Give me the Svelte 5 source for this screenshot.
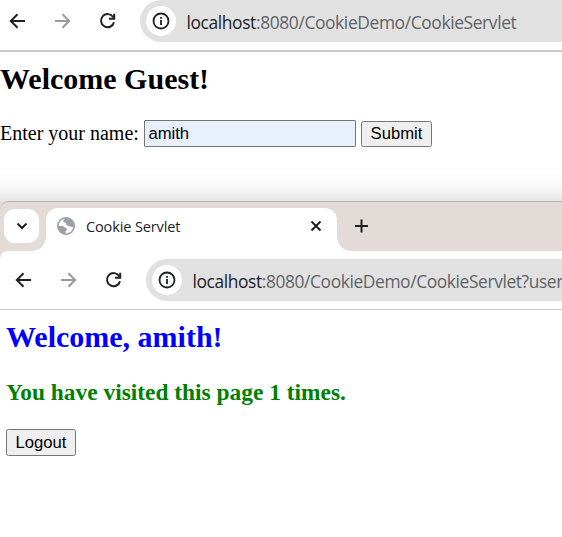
<script>
  const path = '/CookieDemo/CookieServlet';
  let name = $state('amith');
</script>

{#snippet toolbar(query)}
  <div class="toolbar">
    <svg class="nav" width="20" height="20" viewBox="0 0 20 20"><path d="M17 10H3M9.5 3.3L2.8 10L9.5 16.7" /></svg>
    <svg class="nav muted" width="20" height="20" viewBox="0 0 20 20"><path d="M2 10H16M9.5 3.3L16.2 10L9.5 16.7" /></svg>
    <svg class="nav" width="20" height="20" viewBox="0 0 20 20"><path d="M15.2 6.2A6.6 6.6 0 1 0 16 11.3M16.2 2.7V7.8H10.9" /></svg>
    <div class="address">
      <span class="site">
        <svg width="18" height="18" viewBox="0 0 18 18"><circle cx="9" cy="9" r="7.5" /><path d="M9 8V13M9 5V6.7" /></svg>
      </span>
      <span class="url"><b>localhost</b>:8080{path}{query}</span>
    </div>
  </div>
{/snippet}

<main>
  <section class="first">
    {@render toolbar('')}
    <div class="page">
      <h1>Welcome Guest!</h1>
      <form onsubmit={(e) => e.preventDefault()}>
        <label for="name">Enter your name:</label>
        <input id="name" bind:value={name} />
        <button>Submit</button>
      </form>
    </div>
  </section>

  <section class="second">
    <div class="strip">
      <span class="search">
        <svg width="12" height="10" viewBox="0 0 12 10"><path d="M1.5 2.5L6 7L10.5 2.5" /></svg>
      </span>
      <div class="tab">
        <svg class="globe" width="18" height="18" viewBox="0 0 18 18">
          <circle cx="9" cy="9" r="9" />
          <path d="M9.2 1.7C6.5 2 5.6 4 6.9 5.1C8 6 9.3 5.5 9.1 7.1C8.9 8.5 10.7 8.8 12.3 8.9C14.4 9 14 11 16.2 9.7C15.9 13.5 12.7 16.4 8.5 16.2V14.2C10.5 13.8 10.6 11.6 8.9 11.1C7.5 10.7 7.4 9 5.5 9H1.8C1.5 5 4.6 1.7 9.2 1.7Z" />
        </svg>
        <span class="title">Cookie Servlet</span>
        <svg class="close" width="12" height="12" viewBox="0 0 12 12"><path d="M1.5 1.5L10.5 10.5M10.5 1.5L1.5 10.5" /></svg>
      </div>
      <svg class="plus" width="14" height="14" viewBox="0 0 14 14"><path d="M6.5 .5V13.5M0 7H13" /></svg>
    </div>
    {@render toolbar('?user')}
    <div class="page">
      <h1>Welcome, amith!</h1>
      <h2>You have visited this page 1 times.</h2>
      <button>Logout</button>
    </div>
  </section>
</main>

<style>
  main {
    width: 562px;
    height: 537px;
    overflow: hidden;
    background: #fff;
    color: #000;
    font-family: 'Liberation Serif', serif;
  }
  section { overflow: hidden; }
  svg { display: block; flex: none; fill: none; stroke: #202124; stroke-width: 2; }
  .first {
    height: 201px;
    background: linear-gradient(#fff 172px, #f8f8f8 187px, #e6e6e6 201px);
  }
  .toolbar {
    display: flex;
    align-items: center;
    box-sizing: border-box;
    background: #fff;
  }
  .first .toolbar { height: 52px; padding: 0 0 8px 8px; border-bottom: 2px solid #cbcbcb; }
  .second .toolbar { height: 59px; padding: 0 0 0 14px; border-bottom: 1px solid #cbcbcb; border-top-left-radius: 8px; }
  .nav { margin-right: 25px; }
  .nav.muted { stroke: #9b9b9b; }
  .address {
    flex: 1;
    display: flex;
    align-items: center;
    box-sizing: border-box;
    height: 42px;
    margin-left: -3px;
    padding-left: 6px;
    border-radius: 21px 0 0 21px;
    background: #e1e1e1;
  }
  .site {
    display: grid;
    place-items: center;
    flex: none;
    width: 30px;
    height: 30px;
    margin-right: 10.5px;
    border-radius: 50%;
    background: #fff;
  }
  .site svg { stroke-width: 1.8; }
  .url {
    padding-top: 2px;
    font: 17.4px/24px 'Open Sans', sans-serif;
    letter-spacing: -0.38px;
    white-space: nowrap;
    color: #606366;
  }
  .second .url { letter-spacing: -0.4px; }
  .url b { font-weight: 400; color: #202124; }
  h1, h2 { margin: 0; font-weight: 700; white-space: nowrap; }
  h1 { font-size: 30px; line-height: 34px; }
  .first .page { padding-top: 10px; }
  form { display: flex; align-items: center; height: 27px; margin-top: 24px; }
  label { width: 144px; padding-bottom: 2px; font-size: 20px; line-height: 24px; white-space: nowrap; }
  input, button {
    box-sizing: border-box;
    border: 1px solid #767676;
    border-radius: 2.5px;
    color: #000;
    font: 16.67px/20px 'Liberation Sans', sans-serif;
  }
  input { width: 212px; height: 27px; margin: 0 5px 0 0; padding: 1px 3.4px; border-radius: 1px; background: #e8f0fe; }
  button { display: block; width: 71px; height: 26px; padding: 0; background: #efefef; white-space: nowrap; }
  .second { height: 336px; background: #e2dbd8; }
  .strip {
    display: flex;
    box-sizing: border-box;
    height: 50px;
    padding: 6px 0 0 4px;
    border-top: 1px solid #b0b3b3;
    border-top-left-radius: 9px;
    background: #e2dbd8;
  }
  .search {
    display: grid;
    place-items: center;
    width: 35px;
    height: 34px;
    margin: 1px 7px 0 0;
    border-radius: 11px;
    background: #fff;
  }
  .tab {
    position: relative;
    display: flex;
    align-items: center;
    box-sizing: border-box;
    width: 291px;
    height: 43px;
    padding: 0 15px 7px 11px;
    border-radius: 12px 12px 0 0;
    background: #fff;
  }
  .tab::before, .tab::after { content: ''; position: absolute; bottom: 0; width: 14px; height: 14px; }
  .tab::before { left: -14px; background: radial-gradient(circle at 0 0, transparent 13.5px, #fff 14px); }
  .tab::after { right: -14px; background: radial-gradient(circle at 100% 0, transparent 13.5px, #fff 14px); }
  .globe { stroke: none; }
  .globe circle { fill: #9aa0a6; }
  .globe path { fill: #fff; }
  .title { margin-left: 11px; padding-top: 1px; color: #202124; font: 14.5px/20px 'Open Sans', sans-serif; letter-spacing: -0.12px; white-space: nowrap; }
  .close { margin-left: auto; }
  .plus { margin: 11px 0 0 18px; }
  .second .page { height: 227px; box-sizing: border-box; padding: 10px 0 0 6px; background: #fff; }
  .second h1 { color: #00f; }
  h2 { margin: 25px 0 23px; color: #008000; font-size: 23.4px; line-height: 27px; }
  .second button { width: 70px; height: 27px; }
</style>
